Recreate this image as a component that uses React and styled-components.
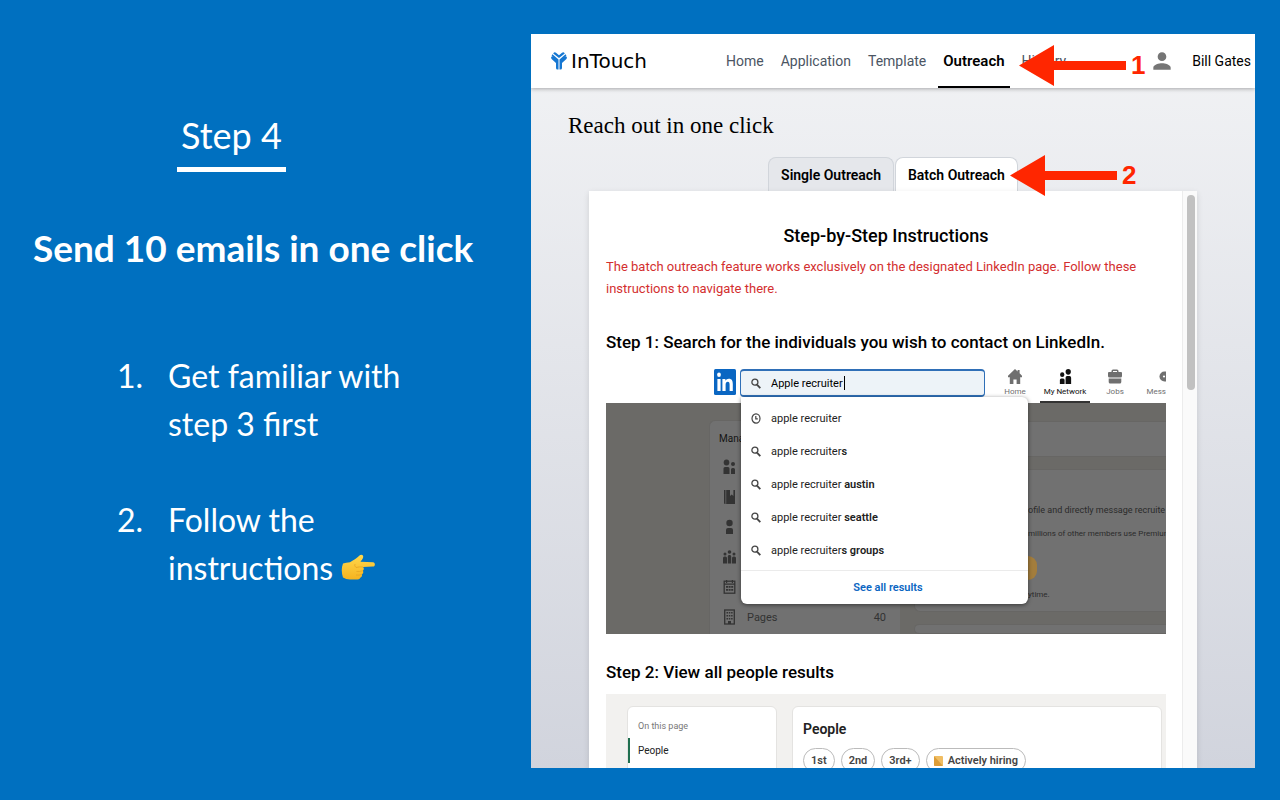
import React, { useState } from "react";
import styled, { createGlobalStyle } from "styled-components";
import { MdPerson } from "react-icons/md";

const GlobalStyle = createGlobalStyle`
  * {
    box-sizing: border-box;
  }
  body {
    margin: 0;
    background-color: #0070c0;
    font-family: Roboto, "Liberation Sans", sans-serif;
    color: #000;
  }
  h1, h2, h3, h4, p, ol, ul, figure {
    margin: 0;
    padding: 0;
  }
  ol, ul {
    list-style: none;
  }
  a {
    color: inherit;
    text-decoration: none;
  }
  button, input {
    font: inherit;
    color: inherit;
  }
  svg {
    display: block;
    flex: none;
  }
`;

const Slide = styled.div`
  display: grid;
  grid-template-columns: 531fr 724fr;
  height: 100vh;
  padding: 34px 25px 32px 0;
  overflow: hidden;
`;

/* left side */
const Intro = styled.section`
  display: flex;
  flex-direction: column;
  align-items: flex-start;
  padding: 77px 24px 0 33px;
  color: #fff;
  font-family: Lato, "Open Sans", sans-serif;
`;
const StepLabel = styled.p`
  margin-left: 144px;
  padding: 0 4px 8px;
  border-bottom: 5px solid #fff;
  font-size: 36px;
  line-height: 48px;
`;
const IntroTitle = styled.h1`
  margin-top: 50px;
  font-size: 37px;
  font-weight: 700;
  line-height: 52px;
  white-space: nowrap;
`;
const IntroList = styled.ol`
  display: grid;
  gap: 48px;
  margin: 78px 0 0 84px;
`;
const IntroItem = styled.li`
  display: grid;
  grid-template-columns: 51px 240px;
  font-size: 32px;
  line-height: 48px;
  svg {
    display: inline-block;
    vertical-align: 0;
  }
`;

/* right side */
const Window = styled.div`
  position: relative;
  display: flex;
  flex-direction: column;
  min-width: 0;
  min-height: 0;
  overflow: hidden;
  background: linear-gradient(#f2f3f5, #d1d4dd);
`;
const HeaderBar = styled.header`
  position: relative;
  display: flex;
  flex: none;
  align-items: center;
  height: 54px;
  padding: 0 4px 0 20px;
  background-color: #fff;
  box-shadow: 0 1px 4px rgba(0, 0, 0, 0.3);
`;
const Logo = styled.a`
  display: flex;
  align-items: center;
  gap: 4px;
  font-family: "DejaVu Sans", sans-serif;
  font-size: 20px;
`;
const Nav = styled.nav`
  display: flex;
  gap: 7px;
  margin: 0 auto 0 74px;
`;
const NavLink = styled.a`
  height: 54px;
  padding: 0 5px;
  border-bottom: 2px solid ${(props) => (props.$active ? "#000" : "transparent")};
  color: ${(props) => (props.$active ? "#000" : "#4b5563")};
  font-size: ${(props) => (props.$active ? 15 : 14)}px;
  font-weight: ${(props) => (props.$active ? 600 : 400)};
  line-height: 55px;
`;
const Account = styled.a`
  display: flex;
  align-items: center;
  gap: 17px;
  font-size: 14px;
  white-space: nowrap;
  svg {
    color: #757575;
  }
`;
const PageTitle = styled.h2`
  margin: 22px 0 15px 37px;
  font-family: "Liberation Serif", serif;
  font-size: 23px;
  font-weight: 400;
  line-height: 32px;
`;
const Tabs = styled.div`
  display: flex;
  flex: none;
  justify-content: center;
  gap: 1px;
`;
const Tab = styled.button`
  height: 34px;
  padding: 0 12px;
  border: 1px solid #d1d5db;
  border-bottom: 0;
  border-radius: 8px 8px 0 0;
  background-color: ${(props) => (props.$active ? "#fff" : "#e5e7eb")};
  font-size: 14px;
  font-weight: 600;
  cursor: pointer;
`;
const Sheet = styled.main`
  display: flex;
  flex: 1;
  min-height: 0;
  margin: 0 58px;
  background-color: #fff;
  box-shadow: 0 2px 6px rgba(0, 0, 0, 0.12);
`;
const Article = styled.div`
  flex: 1;
  min-width: 0;
  padding: 31px 16px 0 17px;
  overflow: hidden;
`;
const ScrollTrack = styled.div`
  flex: none;
  width: 15px;
  padding: 4px 2px 0 4px;
  border-left: 1px solid #ececec;
  background-color: #fafafa;
`;
const ScrollThumb = styled.div`
  height: 34%;
  border-radius: 4px;
  background-color: #c1c1c1;
`;
const ArticleTitle = styled.h3`
  font-size: 18px;
  font-weight: 500;
  line-height: 28px;
  text-align: center;
`;
const Notice = styled.p`
  margin-top: 6px;
  color: #d32f2f;
  font-size: 13px;
  line-height: 22px;
`;
const StepTitle = styled.h4`
  margin: ${(props) => props.$top}px 0 8px;
  font-size: 17px;
  font-weight: 500;
  line-height: 28px;
`;

/* first illustration: search on LinkedIn */
const Shot = styled.figure`
  position: relative;
  overflow: hidden;
`;
const SearchRow = styled.div`
  display: flex;
  align-items: flex-start;
  height: 39px;
  padding: 5px 0 0 108px;
`;
const SearchBox = styled.label`
  display: flex;
  flex: none;
  align-items: center;
  width: 245px;
  height: 28px;
  margin-left: 4px;
  padding-left: 10px;
  border: 1px solid #2f6fb7;
  border-width: 2px 1px;
  border-radius: 4px;
  background-color: #edf3f8;
  font-size: 11px;
  input {
    width: 73px;
    margin-left: 10px;
    padding: 0;
    border: 0;
    outline: 0;
    background: none;
    field-sizing: content;
  }
`;
const Caret = styled.span`
  width: 1px;
  height: 14px;
  background-color: #000;
`;
const SiteNav = styled.nav`
  display: flex;
  margin-left: 5px;
`;
const SiteLink = styled.a`
  display: flex;
  flex: none;
  flex-direction: column;
  align-items: center;
  width: 50px;
  height: 34px;
  border-bottom: 2px solid ${(props) => (props.$active ? "#333" : "transparent")};
  color: ${(props) => (props.$active ? "#111" : "#6f6f6f")};
  font-size: 8px;
  line-height: 16px;
  white-space: nowrap;
`;
const EdgeLink = styled(SiteLink)`
  align-items: flex-end;
  width: 26px;
`;
const Backdrop = styled.div`
  display: grid;
  grid-template-columns: 191px 1fr;
  gap: 14px;
  height: 231px;
  padding-left: 103px;
  background-color: #6b6a67;
  color: #2b2b2b;
`;
const DimCard = styled.div`
  border: 1px solid #676664;
  border-right: 0;
  border-radius: ${(props) => (props.$square ? 0 : "6px 0 0 6px")};
  background-color: #717171;
`;
const ManageMenu = styled(DimCard)`
  margin-top: 17px;
  border-bottom: 0;
  border-radius: 6px 6px 0 0;
  font-size: 11px;
`;
const ManageTitle = styled.p`
  padding: 5px 9px 0;
  color: #141414;
  font-size: 10px;
  line-height: 26px;
`;
const ManageItem = styled.li`
  display: flex;
  align-items: center;
  height: 30px;
  padding: 0 14px 0 13px;
  color: #333;
  span {
    margin: 0 auto 0 11px;
  }
`;
const DimColumn = styled.div`
  display: grid;
  grid-template-rows: 36px 143px 1fr;
  gap: 12px;
  padding-top: 18px;
  min-width: 0;
  overflow: hidden;
`;
const PremiumCard = styled(DimCard)`
  padding: 28px 0 0 113px;
  white-space: nowrap;
`;
const PremiumLine = styled.p`
  font-size: ${(props) => props.$size}px;
  line-height: 24px;
`;
const PremiumPill = styled.div`
  width: 9px;
  height: 24px;
  margin: 10px 0 3px;
  border-radius: 0 12px 12px 0;
  background-color: #a37d3c;
`;
const Dropdown = styled.div`
  position: absolute;
  top: 33px;
  left: 135px;
  width: 287px;
  padding-top: 5px;
  border-radius: 0 6px 6px 6px;
  background-color: #fff;
  box-shadow: 0 1px 4px rgba(0, 0, 0, 0.5);
  font-size: 11px;
`;
const Suggestion = styled.li`
  display: flex;
  align-items: center;
  gap: 10px;
  height: 33px;
  padding-left: 10px;
  color: #222;
  b {
    font-weight: 600;
  }
`;
const SeeAll = styled.a`
  display: block;
  margin-top: 3px;
  padding-left: 7px;
  border-top: 1px solid #ebebeb;
  color: #0a66c2;
  font-weight: 600;
  line-height: 33px;
  text-align: center;
`;

/* second illustration: people results */
const ResultsShot = styled.figure`
  display: grid;
  grid-template-columns: 150px 1fr;
  gap: 15px;
  height: 200px;
  padding: 12px 4px 0 21px;
  background-color: #f2f1ef;
`;
const LightCard = styled.div`
  border: 1px solid #e4e3e1;
  border-radius: 6px;
  background-color: #fff;
  color: #222;
`;
const OnThisPage = styled.p`
  padding: 7px 10px 0;
  color: #777;
  font-size: 9px;
  line-height: 24px;
`;
const PageAnchor = styled.a`
  display: block;
  padding-left: 8px;
  border-left: 2px solid #1f6f4f;
  font-size: 10px;
  line-height: 25px;
`;
const PeopleTitle = styled.h4`
  padding: 10px 10px 6px;
  font-size: 14px;
  font-weight: 600;
  line-height: 25px;
`;
const Chips = styled.div`
  display: flex;
  gap: 6px;
  padding-left: 10px;
`;
const Chip = styled.button`
  display: flex;
  align-items: center;
  gap: 5px;
  height: 25px;
  padding: 0 7px;
  border: 1px solid #bbb;
  border-radius: 13px;
  background-color: #fff;
  color: #444;
  font-size: 11px;
  font-weight: 600;
  cursor: pointer;
`;

/* red pointers that lie over the window */
const Pointer = styled.div`
  position: absolute;
  top: ${(props) => props.$top}px;
  left: ${(props) => props.$left}px;
  display: flex;
  align-items: center;
  gap: 5px;
  color: #ff2600;
  font-family: "Liberation Sans", sans-serif;
  font-size: 26px;
  font-weight: 700;
  line-height: 41px;
`;

const SearchIcon = () => (
  <svg width="10" height="11" viewBox="0 0 10 11" fill="none" stroke="#444">
    <circle cx="3.9" cy="4.2" r="3" strokeWidth="1.3" />
    <path d="M6.2 6.8L9.3 10.2" strokeWidth="1.8" />
  </svg>
);

const ClockIcon = () => (
  <svg width="10" height="11" viewBox="0 0 10 11" fill="none" stroke="#444">
    <ellipse cx="5" cy="5.5" rx="4" ry="4.6" strokeWidth="1.2" />
    <path d="M4.8 3v2.8h2" strokeWidth="1.2" />
  </svg>
);

const NetworkIcon = () => (
  <svg width="13" height="15" viewBox="0 0 13 16" fill="currentColor">
    <ellipse cx="3" cy="6" rx="2.3" ry="2.6" />
    <ellipse cx="9.4" cy="3" rx="2.8" ry="3" />
    <path d="M.5 11.6Q.5 10 2 10h2q1.5 0 1.5 1.6V16H.5zM6.6 9.3Q6.6 7.5 8.2 7.5h2.6q1.7 0 1.7 1.8V16H6.6z" />
  </svg>
);

const HomeIcon = () => (
  <svg width="14" height="15" viewBox="0 0 14 15" fill="currentColor">
    <path d="M7 0l2.6 2.4V1h2v3.3L14 6.700v1.6h-1.8V15H8.600v-4.500H5.400V15H1.800V8.300H0V6.700z" />
  </svg>
);

const JobsIcon = () => (
  <svg width="14" height="15" viewBox="0 0 14 15" fill="currentColor">
    <path d="M3.500 3V2Q3.500.5 5 .5h4q1.500 0 1.500 1.500v1H13q1 0 1 1v3q0 1.500-1.500 1.500h-11Q0 8.500 0 7V4q0-1 1-1zM5 3h4V2H5zM.7 9.500h12.600V13q0 1.500-1.500 1.500H2.200Q.7 14.500.7 13z" />
  </svg>
);

/* only the left half, the rest lies past the edge */
const MessageIcon = () => (
  <svg width="7" height="15" viewBox="0 0 7 15" fill="currentColor">
    <path d="M7 2.500H5.500a5 5 0 0 0 0 10H7z" />
    <circle cx="5" cy="7.500" r="1.100" fill="#fff" />
  </svg>
);

const manageIcons = {
  people: (
    <>
      <ellipse cx="3.5" cy="3.5" rx="2.8" ry="3" />
      <circle cx="10" cy="5" r="2" />
      <path d="M.5 9.500Q.5 8 2 8h3q1.500 0 1.500 1.500V15h-6zM8 10.500Q8 9 9.500 9h1Q12 9 12 10.500V15H8z" />
    </>
  ),
  book: <path d="M1 1h1.500v14H2a1 1 0 0 1-1-1zM3.200 1H7v6l1.700-1.500L10.400 7V1H12v14H3.200z" />,
  person: (
    <>
      <circle cx="6.5" cy="4" r="3.2" />
      <path d="M3 11q0-2 2-2h3q2 0 2 2v4H3z" />
    </>
  ),
  group: (
    <>
      <circle cx="6.5" cy="3" r="1.8" />
      <circle cx="2" cy="5" r="1.5" />
      <circle cx="11" cy="5" r="1.5" />
      <path d="M0 9q0-1.500 1.500-1.500h1Q4 7.500 4 9v5.500H0zM4.800 7.500Q4.800 6 6 6h1q1.200 0 1.200 1.500v7H4.800zM9 9q0-1.500 1.500-1.500h1Q13 7.500 13 9v5.500H9z" />
    </>
  ),
  calendar: (
    <>
      <rect x="1.2" y="2.2" width="10.6" height="12" fill="none" stroke="currentColor" strokeWidth="1.3" />
      <path d="M1 4.500h11v1.300H1zM3 1h1.200v3H3zM8.800 1H10v3H8.800zM3 7h2v1.800H3zM5.600 7h2v1.800h-2zM8.200 7h2v1.800h-2zM3 10h2v1.800H3zM5.600 10h2v1.800h-2zM8.200 10h2v1.800h-2z" />
    </>
  ),
  building: (
    <>
      <rect x="1.7" y="1" width="9.6" height="14" fill="none" stroke="currentColor" strokeWidth="1.3" />
      <path d="M3.500 3h1.500v1.600H3.500zM5.800 3h1.500v1.600H5.800zM8.100 3h1.500v1.600H8.100zM3.500 6h1.500v1.600H3.500zM5.800 6h1.500v1.600H5.800zM8.100 6h1.500v1.600H8.100zM3.500 9h1.500v1.600H3.500zM5.800 9h1.500v1.600H5.800zM8.100 9h1.500v1.600H8.100zM5 12h3v3H5z" />
    </>
  ),
};

const ManageIcon = ({ name }) => (
  <svg width="13" height="16" viewBox="0 0 13 16" fill="currentColor">
    {manageIcons[name]}
  </svg>
);

const LinkedInLogo = () => (
  <svg width="22" height="26" viewBox="0 0 22 26">
    <rect width="22" height="26" rx="1.5" fill="#0a66c2" />
    <g fill="#fff">
      <ellipse cx="5" cy="5.8" rx="1.9" ry="2.2" />
      <path d="M3.400 10h3.200v12H3.400zM8.400 10h3v1.700c.7-1.300 1.900-2 3.400-2 3.200 0 4 2.200 4 5.300v7h-3.200v-6.300c0-1.800-.4-3-1.800-3s-2.200 1-2.200 3V22H8.400z" />
    </g>
  </svg>
);

const InTouchMark = () => (
  <svg width="16" height="18" viewBox="0 0 16 18" fill="#1677d2">
    <path d="M3 .6Q4 0 5 .8L8 3.200 11 .8Q12 0 13 .6l.8.8L8 6 2.200 1.400z" />
    <path d="M1.500 2.200L7.500 7.400V17.500H6.500Q5 17.500 5 16v-5L.6 7Q-.4 5.600.6 4.600l1-.2-1-1z" />
    <path d="M14.500 2.200L8.500 7.400V17.500h1q1.500 0 1.500-1.500v-5l4.400-4q1-1.400 0-2.400l-1-.2 1-1z" />
  </svg>
);

const HandIcon = () => (
  <svg width="34" height="26" viewBox="0 0 34 26">
    <defs>
      <linearGradient id="hand" x2="0" y2="1">
        <stop offset="0" stopColor="#ffd84d" />
        <stop offset="1" stopColor="#f5b31f" />
      </linearGradient>
    </defs>
    <path
      d="M2 9.500Q5 8.500 9 8.300C13 6 16 4 18.500 1.500c1.500-1.500 4-.8 3.700 1.500-.3 2-2 3.500-2.700 4.700L32 8.200c2.500.2 2.500 4.200 0 4.300l-10 .5c1 .6 1.300 2.500-.1 3.700.8 1.300.3 3-1 3.700.4 1.600-.3 2.900-1.600 3.300-.8 1.500-2 1.800-3.800 1.800H9Q5 25.500 2 23.500-.5 16 2 9.500z"
      fill="url(#hand)"
    />
    <path d="M15 13.500q3.500-1 7-.5M15.500 17.500q3.500.3 6.400-.8M15 21q3.500.5 5.900-.6M15 13.500q-2-1.500-1-3.500" fill="none" stroke="#e3a021" strokeWidth=".7" />
  </svg>
);

const Arrow = () => (
  <svg width="107" height="41" viewBox="0 0 107 41" fill="#ff2600">
    <path d="M0 20.500L35 0v16h72v9H35v16z" />
  </svg>
);

const navLinks = ["Home", "Application", "Template", "Outreach", "History"];
const tabs = ["Single Outreach", "Batch Outreach"];
const suggestions = [
  { text: "apple recruiter", bold: "", recent: true },
  { text: "apple recruiter", bold: "s" },
  { text: "apple recruiter ", bold: "austin" },
  { text: "apple recruiter ", bold: "seattle" },
  { text: "apple recruiter", bold: "s groups" },
];

const Header = () => (
  <HeaderBar>
    <Logo href="#home">
      <InTouchMark />
      InTouch
    </Logo>
    <Nav>
      {navLinks.map((link) => (
        <NavLink key={link} href={`#${link}`} $active={link === "Outreach"}>
          {link}
        </NavLink>
      ))}
    </Nav>
    <Account href="#account">
      <MdPerson size={26} />
      Bill Gates
    </Account>
  </HeaderBar>
);

const SearchShot = () => (
  <Shot>
    <SearchRow>
      <LinkedInLogo />
      <SearchBox>
        <SearchIcon />
        <input type="text" aria-label="Search" defaultValue="Apple recruiter" />
        <Caret />
      </SearchBox>
      <SiteNav>
        <SiteLink href="#feed">
          <HomeIcon />
          Home
        </SiteLink>
        <SiteLink href="#network" $active>
          <NetworkIcon />
          My Network
        </SiteLink>
        <SiteLink href="#jobs">
          <JobsIcon />
          Jobs
        </SiteLink>
        <EdgeLink href="#messaging">
          <MessageIcon />
          Mess
        </EdgeLink>
      </SiteNav>
    </SearchRow>
    <Backdrop>
      <ManageMenu>
        <ManageTitle>Mana</ManageTitle>
        <ul>
          {["people", "book", "person", "group", "calendar"].map((name) => (
            <ManageItem key={name}>
              <ManageIcon name={name} />
            </ManageItem>
          ))}
          <ManageItem>
            <ManageIcon name="building" />
            <span>Pages</span>
            40
          </ManageItem>
        </ul>
      </ManageMenu>
      <DimColumn>
        <DimCard $square />
        <PremiumCard>
          <PremiumLine $size={9}>ofile and directly message recruite</PremiumLine>
          <PremiumLine $size={8}>millions of other members use Premiun</PremiumLine>
          <PremiumPill />
          <PremiumLine $size={8}>ytime.</PremiumLine>
        </PremiumCard>
        <DimCard />
      </DimColumn>
    </Backdrop>
    <Dropdown>
      <ul>
        {suggestions.map((item) => (
          <Suggestion key={item.text + item.bold}>
            {item.recent ? <ClockIcon /> : <SearchIcon />}
            <span>
              {item.text}
              <b>{item.bold}</b>
            </span>
          </Suggestion>
        ))}
      </ul>
      <SeeAll href="#results">See all results</SeeAll>
    </Dropdown>
  </Shot>
);

const PeopleShot = () => (
  <ResultsShot>
    <LightCard>
      <OnThisPage>On this page</OnThisPage>
      <PageAnchor href="#people">People</PageAnchor>
    </LightCard>
    <LightCard>
      <PeopleTitle>People</PeopleTitle>
      <Chips>
        <Chip>1st</Chip>
        <Chip>2nd</Chip>
        <Chip>3rd+</Chip>
        <Chip>
          <svg width="9" height="10" viewBox="0 0 9 10">
            <rect width="9" height="10" rx="1" fill="#f0bd62" />
            <path d="M0 0l9 10H1q-1 0-1-1z" fill="#dc9d38" />
          </svg>
          Actively hiring
        </Chip>
      </Chips>
    </LightCard>
  </ResultsShot>
);

const App = () => {
  const [tab, setTab] = useState("Batch Outreach");
  return (
    <>
      <GlobalStyle />
      <Slide>
        <Intro>
          <StepLabel>Step 4</StepLabel>
          <IntroTitle>Send 10 emails in one click</IntroTitle>
          <IntroList>
            <IntroItem>
              <span>1.</span>
              <span>
                Get familiar with <br />
                step 3 first
              </span>
            </IntroItem>
            <IntroItem>
              <span>2.</span>
              <span>
                Follow the <br />
                instructions <HandIcon />
              </span>
            </IntroItem>
          </IntroList>
        </Intro>
        <Window>
          <Header />
          <PageTitle>Reach out in one click</PageTitle>
          <Tabs>
            {tabs.map((name) => (
              <Tab key={name} $active={name === tab} onClick={() => setTab(name)}>
                {name}
              </Tab>
            ))}
          </Tabs>
          <Sheet>
            <Article>
              <ArticleTitle>Step-by-Step Instructions</ArticleTitle>
              <Notice>
                The batch outreach feature works exclusively on the designated LinkedIn page. Follow
                these instructions to navigate there.
              </Notice>
              <StepTitle $top={28}>
                Step 1: Search for the individuals you wish to contact on LinkedIn.
              </StepTitle>
              <SearchShot />
              <StepTitle $top={24}>Step 2: View all people results</StepTitle>
              <PeopleShot />
            </Article>
            <ScrollTrack>
              <ScrollThumb />
            </ScrollTrack>
          </Sheet>
          <Pointer $top={11} $left={488}>
            <Arrow />1
          </Pointer>
          <Pointer $top={121} $left={479}>
            <Arrow />2
          </Pointer>
        </Window>
      </Slide>
    </>
  );
};

export default App;
